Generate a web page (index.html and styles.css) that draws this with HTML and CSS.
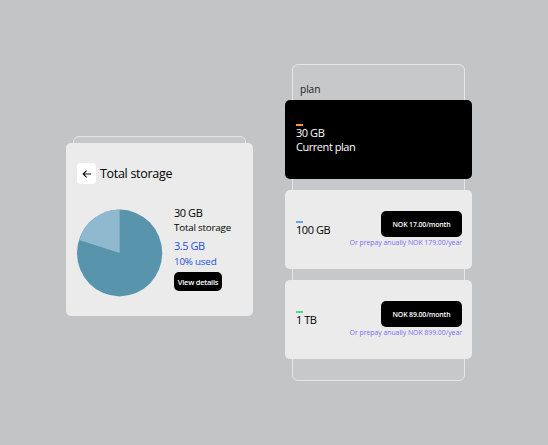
FILE: index.html
```html
<!DOCTYPE html>
<html lang="en">
<head>
<meta charset="utf-8">
<title>Storage</title>
<link rel="stylesheet" href="styles.css">
</head>
<body>
<main class="page">
  <section class="frame frame-storage">
    <div class="card storage">
      <header class="heading">
        <button class="back" aria-label="Back">
          <svg width="10" height="10" viewBox="0 0 10 10" fill="none" stroke="#111" stroke-width="1.15"><path d="M9.2 5H1.2M4.6 1.6L1.2 5l3.4 3.4"/></svg>
        </button>
        <h1><span class="t-title">Total storage</span></h1>
      </header>
      <div class="usage">
        <svg class="pie" width="86" height="88" viewBox="0 0 86 88">
          <ellipse cx="42.6" cy="44" rx="42.6" ry="43.4" fill="#5994ad"/>
          <path d="M42.6 44V.6A42.6 43.4 0 0 0 2.1 30.9Z" fill="#8eb9cf"/>
        </svg>
        <div class="details">
          <p class="total"><span class="t-gb">30 GB</span></p>
          <p class="total-label"><span class="t-label">Total storage</span></p>
          <p class="used"><span class="t-gb">3.5 GB</span></p>
          <p class="used-label"><span class="t-percent">10% used</span></p>
          <button class="view"><span class="t-view">View details</span></button>
        </div>
      </div>
    </div>
  </section>
  <section class="frame frame-plans">
    <h2>plan</h2>
    <div class="plans">
      <article class="card plan current">
        <div class="size"><i class="dash orange"></i><p><span class="t-gb">30 GB</span></p><p><span class="t-current">Current plan</span></p></div>
      </article>
      <article class="card plan">
        <div class="size"><i class="dash blue"></i><p><span class="t-gb">100 GB</span></p></div>
        <div class="offer"><button class="price"><span class="t-price">NOK 17.00/month</span></button><p class="yearly"><span class="t-year">Or prepay anually NOK 179.00/year</span></p></div>
      </article>
      <article class="card plan">
        <div class="size"><i class="dash green"></i><p><span class="t-gb">1 TB</span></p></div>
        <div class="offer"><button class="price"><span class="t-price">NOK 89.00/month</span></button><p class="yearly"><span class="t-year">Or prepay anually NOK 899.00/year</span></p></div>
      </article>
    </div>
  </section>
</main>
</body>
</html>
```
FILE: styles.css
```css
* { box-sizing: border-box; }
body, h1, h2, p { margin: 0; font-weight: 400; }
body { background: #c3c4c6; color: #000; font-family: "Open Sans", "Noto Sans", sans-serif; white-space: nowrap; }
button { border: 0; padding: 0; font: inherit; display: flex; align-items: center; justify-content: center; }
svg { display: block; }

.page { display: flex; align-items: flex-start; gap: 46px; width: 548px; height: 445px; padding: 64px 0 0 73px; overflow: hidden; }
.frame { width: 173px; border: 1px solid #e5e6e7; border-radius: 6px; background: #c7c8ca; }
.frame-storage { margin-top: 72px; height: 174px; padding-top: 6px; }
.frame-plans { height: 317px; }
.card { width: 187px; margin-left: -8px; border-radius: 5px; background: #ebebeb; }

.storage { height: 173px; padding: 20px 0 0 11px; }
.heading { display: flex; gap: 4px; height: 21px; }
.back { width: 19px; height: 21px; border-radius: 4px; background: #fff; }
.heading h1 { font-size: 12.5px; line-height: 22px; }
.usage { display: flex; gap: 11px; margin-top: 24px; }
.pie { margin-top: .5px; }
.details p { font-size: 11px; line-height: 14px; height: 14px; }
.details .total { margin-top: -2px; }
.details .total-label { font-size: 9.8px; margin-top: 1px; }
.details .used { margin-top: 4px; color: #2450dc; }
.details .used-label { font-size: 9.8px; margin-top: 2px; color: #2450dc; }
.view { width: 48px; height: 19px; margin-top: 3px; border-radius: 5px; background: #000; color: #fff; font-size: 7.5px; font-weight: 600; }

.frame-plans h2 { padding: 17px 0 0 7px; height: 35px; font-size: 10.2px; line-height: 14px; letter-spacing: -.1px; color: #1d1d1f; }
.plans { display: flex; flex-direction: column; gap: 11px; }
.plan { display: flex; justify-content: space-between; height: 79px; padding: 21px 10px 0 11px; }
.current { padding-top: 14px; background: #000; color: #fff; }
.size { padding-top: 10px; font-size: 11px; line-height: 14px; }
.dash { display: block; width: 7px; height: 2px; }
.orange { background: #fb923c; }
.blue { background: #60a5fa; }
.green { background: #4ade80; }
.offer { display: flex; flex-direction: column; align-items: flex-end; }
.price { width: 81px; height: 26px; border-radius: 5px; background: #000; color: #fff; font-size: 7px; font-weight: 600; }
.yearly { margin-top: 1px; font-size: 7px; line-height: 10px; color: #786df0; }

.t-title { letter-spacing: -.3px; }
.t-gb { letter-spacing: -.45px; }
.t-label { letter-spacing: -.2px; }
.t-percent { letter-spacing: -.2px; }
.t-current { letter-spacing: -.45px; }
.t-view { letter-spacing: -.25px; }
.t-price { letter-spacing: -.17px; }
.t-year { letter-spacing: -.09px; }
```
